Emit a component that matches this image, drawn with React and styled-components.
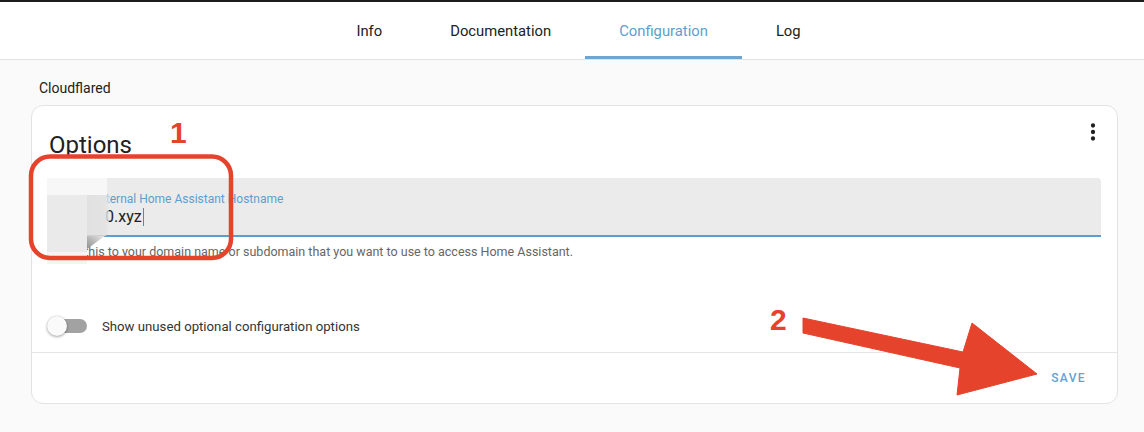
import React from "react";
import styled, { createGlobalStyle } from "styled-components";

const GlobalStyle = createGlobalStyle`
  html, body { margin: 0; padding: 0; }
  body {
    background: #fafafa;
    font-family: Roboto, "Noto Sans", "Liberation Sans", sans-serif;
    color: #212121;
    -webkit-font-smoothing: antialiased;
  }
  * { box-sizing: border-box; }
`;

const Page = styled.div`
  position: relative;
  width: 1144px;
  height: 432px;
  overflow: hidden;
  background: #fafafa;
`;

const TopLine = styled.div`
  height: 2px;
  background: #1d1d1d;
`;

const Header = styled.header`
  height: 58px;
  background: #ffffff;
  border-bottom: 1px solid #e2e2e2;
  display: flex;
  justify-content: center;
  padding-left: 13px;
`;

const Tab = styled.div`
  position: relative;
  height: 100%;
  padding: 0 34px;
  display: flex;
  align-items: center;
  font-size: 14.8px;
  color: ${(p) => (p.$active ? "#5b9fd1" : "#212121")};
  &::after {
    content: "";
    display: ${(p) => (p.$active ? "block" : "none")};
    position: absolute;
    left: 0;
    right: 0;
    bottom: 0;
    height: 3px;
    background: #6ea6d1;
  }
`;

const Main = styled.main`
  padding: 18px 26px 0 31px;
`;

const SectionTitle = styled.div`
  font-size: 14px;
  line-height: 20px;
  color: #212121;
  margin: 0 0 7px 8px;
`;

const Card = styled.section`
  background: #ffffff;
  border: 1px solid #e3e3e3;
  border-radius: 12px;
`;

const CardHeader = styled.div`
  display: flex;
  justify-content: space-between;
  align-items: flex-start;
  padding: 6px 4px 0 17px;
`;

const CardTitle = styled.h1`
  margin: 17px 0 0;
  font-size: 24px;
  line-height: 32px;
  font-weight: 400;
  color: #212121;
`;

const IconButton = styled.button`
  width: 40px;
  height: 40px;
  border: 0;
  background: transparent;
  padding: 0;
  display: flex;
  align-items: center;
  justify-content: center;
  color: #212121;
`;

const CardContent = styled.div`
  padding: 17px 16px 6px 15px;
`;

const Field = styled.div`
  height: 59px;
  background: #ebebeb;
  border-radius: 4px 4px 0 0;
  border-bottom: 2px solid #5a9fd2;
  padding-top: 13px;
`;

const FieldLabel = styled.div`
  font-size: 12px;
  line-height: 16px;
  color: #5a9fd2;
  margin-left: ${(p) => p.$indent}px;
`;

const FieldValue = styled.div`
  font-size: 16px;
  line-height: 20px;
  color: #212121;
  margin-left: ${(p) => p.$indent}px;
  display: flex;
  align-items: center;
`;

const Caret = styled.span`
  display: inline-block;
  width: 1px;
  height: 18px;
  margin-left: 1px;
  background: #3f8fcf;
`;

const Helper = styled.div`
  padding: 7px 0 0 16px;
  font-size: 12.5px;
  line-height: 16px;
  color: #666666;
`;

const ToggleRow = styled.div`
  margin-top: 46px;
  height: 40px;
  display: flex;
  align-items: center;
  gap: 15px;
`;

const Switch = styled.div`
  position: relative;
  width: 40px;
  height: 20px;
`;

const SwitchTrack = styled.div`
  position: absolute;
  left: 4px;
  top: 3px;
  width: 36px;
  height: 14px;
  border-radius: 7px;
  background: #a2a2a2;
`;

const SwitchThumb = styled.div`
  position: absolute;
  left: 0;
  top: 0;
  width: 20px;
  height: 20px;
  border-radius: 50%;
  background: #fafafa;
  box-shadow: 0 1px 3px rgba(0, 0, 0, 0.35), 0 0 1px rgba(0, 0, 0, 0.2);
`;

const ToggleLabel = styled.span`
  font-size: 13.2px;
  color: #333333;
`;

const CardActions = styled.div`
  border-top: 1px solid #e6e6e6;
  padding: 7px 23px 7px 16px;
  display: flex;
  justify-content: flex-end;
`;

const TextButton = styled.button`
  height: 36px;
  padding: 0 8px;
  border: 0;
  background: transparent;
  font-family: Roboto, "Liberation Sans", sans-serif;
  font-size: 12px;
  font-weight: 500;
  letter-spacing: 1.4px;
  color: #5fa3d3;
`;

const Annotations = styled.svg`
  position: absolute;
  left: 0;
  top: 0;
  pointer-events: none;
`;

const Marker = styled.span`
  position: absolute;
  left: ${(p) => p.$x}px;
  top: ${(p) => p.$y}px;
  font-family: "Liberation Sans", Arial, sans-serif;
  font-weight: 700;
  font-size: 30px;
  line-height: 30px;
  color: #e5432c;
  pointer-events: none;
`;

const DotsIcon = () => (
  <svg width="26" height="26" viewBox="0 0 24 24" fill="currentColor">
    <path d="M12,16A2,2 0 0,1 14,18A2,2 0 0,1 12,20A2,2 0 0,1 10,18A2,2 0 0,1 12,16M12,10A2,2 0 0,1 14,12A2,2 0 0,1 12,14A2,2 0 0,1 10,12A2,2 0 0,1 12,10M12,4A2,2 0 0,1 14,6A2,2 0 0,1 12,8A2,2 0 0,1 10,6A2,2 0 0,1 12,4Z" />
  </svg>
);

const tabs = ["Info", "Documentation", "Configuration", "Log"];

export default function App() {
  return (
    <>
      <GlobalStyle />
      <Page>
        <TopLine />
        <Header>
          {tabs.map((t) => (
            <Tab key={t} $active={t === "Configuration"}>
              {t}
            </Tab>
          ))}
        </Header>
        <Main>
          <SectionTitle>Cloudflared</SectionTitle>
          <Card>
            <CardHeader>
              <CardTitle>Options</CardTitle>
              <IconButton aria-label="menu">
                <DotsIcon />
              </IconButton>
            </CardHeader>
            <CardContent>
              <Field>
                <FieldLabel $indent={46}>External Home Assistant Hostname</FieldLabel>
                <FieldValue $indent={58}>
                  0.xyz
                  <Caret />
                </FieldValue>
              </Field>
              <Helper>
                Set this to your domain name or subdomain that you want to use to access Home Assistant.
              </Helper>
              <ToggleRow>
                <Switch>
                  <SwitchTrack />
                  <SwitchThumb />
                </Switch>
                <ToggleLabel>Show unused optional configuration options</ToggleLabel>
              </ToggleRow>
            </CardContent>
            <CardActions>
              <TextButton>SAVE</TextButton>
            </CardActions>
          </Card>
        </Main>

        <Annotations width="1144" height="432" viewBox="0 0 1144 432">
          <defs>
            <filter id="soft" x="-20%" y="-20%" width="140%" height="140%">
              <feGaussianBlur stdDeviation="0.7" />
            </filter>
            <linearGradient id="fadeR" x1="0" y1="0" x2="1" y2="0">
              <stop offset="0" stopColor="#e1e1e1" />
              <stop offset="0.8" stopColor="#e3e3e3" />
              <stop offset="1" stopColor="#e8e8e8" stopOpacity="0.6" />
            </linearGradient>
            <linearGradient id="dark" x1="0" y1="1" x2="1" y2="0">
              <stop offset="0" stopColor="#8e8e8e" />
              <stop offset="0.5" stopColor="#bdbdbd" />
              <stop offset="1" stopColor="#f0f0f0" />
            </linearGradient>
          </defs>
          <g filter="url(#soft)">
            <rect x="47" y="178" width="60" height="17" fill="#f7f7f7" />
            <rect x="47" y="195" width="40" height="57" fill="#eaeaea" />
            <rect x="47" y="252" width="40" height="12" fill="#f4f4f4" />
            <rect x="87" y="195" width="22" height="40" fill="url(#fadeR)" />
            <polygon points="87,235 106,235 87,249" fill="url(#dark)" />
            <rect x="87" y="235" width="19" height="1" fill="#d0d0d0" />
          </g>
          <rect x="31" y="156.5" width="200" height="101.5" rx="19" fill="none" stroke="#e5432c" strokeWidth="4.5" />
          <polygon
            points="803,318 963,352 972,323 1037,374 957,395 960,368 803,333"
            fill="#e5432c"
            stroke="#e5432c"
            strokeWidth="1"
            strokeLinejoin="round"
          />
        </Annotations>
        <Marker $x={170} $y={118}>1</Marker>
        <Marker $x={770} $y={305}>2</Marker>
      </Page>
    </>
  );
}
